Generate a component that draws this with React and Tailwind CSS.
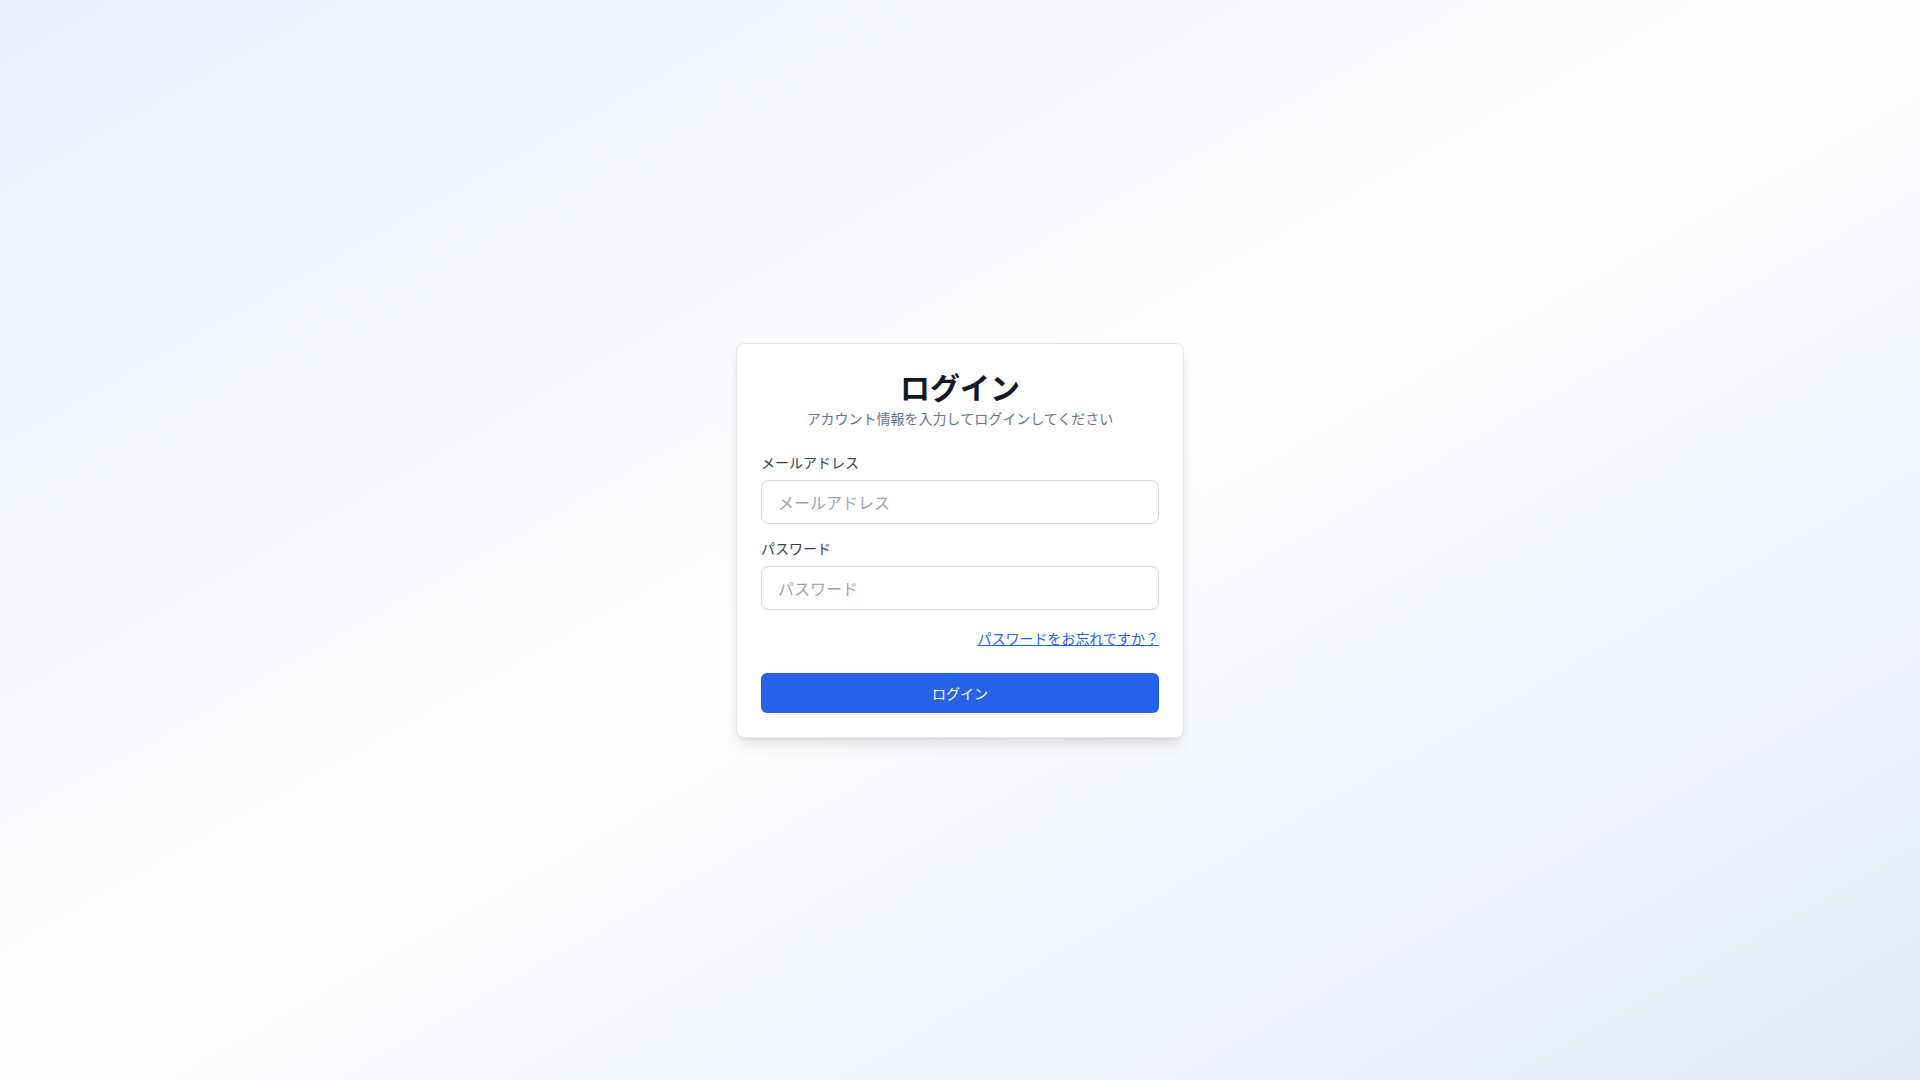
export default function App() {
  return (
    <div
      className="min-h-screen w-full flex items-center justify-center bg-gradient-to-br from-[#eaeef9] via-white to-[#e1e8f8]"
      style={{ fontFamily: '"Noto Sans CJK JP", "Noto Sans", sans-serif' }}
    >
      <div className="w-full max-w-md bg-white border border-[#e5e7eb] rounded-lg shadow-lg p-6">
        <div className="text-center mb-6">
          <h1 className="text-3xl font-bold text-[#111827]">ログイン</h1>
          <p className="mt-1 text-sm text-[#64748b]">
            アカウント情報を入力してログインしてください
          </p>
        </div>
        <form onSubmit={(e) => e.preventDefault()}>
          <div>
            <label className="block mb-2 text-sm font-normal text-[#374151]">メールアドレス</label>
            <input
              type="email"
              placeholder="メールアドレス"
              className="w-full px-4 py-[9px] text-base border border-[#d1d5db] rounded-lg placeholder-[#9ca3af] outline-none"
            />
          </div>
          <div className="mt-[14px]">
            <label className="block mb-2 text-sm font-normal text-[#374151]">パスワード</label>
            <input
              type="password"
              placeholder="パスワード"
              className="w-full px-4 py-[9px] text-base border border-[#d1d5db] rounded-lg placeholder-[#9ca3af] outline-none"
            />
          </div>
          <div className="mt-[18px] flex justify-end">
            <a href="#" className="text-sm text-[#2563eb] underline">
              パスワードをお忘れですか？
            </a>
          </div>
          <button
            type="submit"
            className="mt-[25px] w-full py-2.5 text-sm text-white bg-[#2563eb] rounded-md"
          >
            ログイン
          </button>
        </form>
      </div>
    </div>
  );
}
